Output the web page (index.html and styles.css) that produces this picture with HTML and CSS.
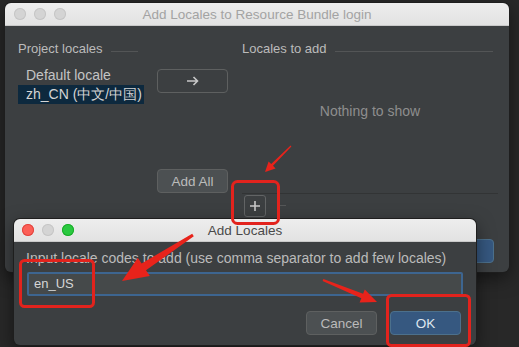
FILE: index.html
```html
<!DOCTYPE html>
<html lang="en">
<head>
    <meta charset="UTF-8">
    <meta name="viewport" content="width=device-width, initial-scale=1.0">
    <title>Add Locales</title>
    <link rel="stylesheet" href="styles.css">
</head>
<body>
    <div class="desktop">
        <div class="window main-window">
            <div class="titlebar inactive">
                <div class="lights"><span></span><span></span><span></span></div>
                <div class="title">Add Locales to Resource Bundle login</div>
            </div>
            <div class="window-body">
                <div class="panes">
                    <div class="col col-left">
                        <div class="header">Project locales<span class="rule"></span></div>
                        <ul class="list">
                            <li>Default locale</li>
                            <li class="selected">zh_CN (中文/中国)</li>
                        </ul>
                    </div>
                    <div class="col col-mid">
                        <button class="btn arrow-btn">
                            <svg width="13" height="10" viewBox="0 0 13 10"><path d="M1 5h10.5M7.5 1l4 4-4 4" fill="none" stroke="#c8c8c8" stroke-width="1.6"/></svg>
                        </button>
                        <button class="btn add-all">Add All</button>
                    </div>
                    <div class="col col-right">
                        <div class="header">Locales to add<span class="rule"></span></div>
                        <div class="empty">Nothing to show</div>
                        <div class="toolbar">
                            <button class="tool-btn">
                                <svg width="12" height="12" viewBox="0 0 12 12"><path d="M6 1v10M1 6h10" stroke="#c8c8c8" stroke-width="1.6"/></svg>
                            </button>
                            <span class="minus"></span>
                        </div>
                    </div>
                </div>
                <div class="footer">
                    <button class="btn primary">OK</button>
                </div>
            </div>
        </div>

        <div class="window dialog">
            <div class="titlebar">
                <div class="lights"><span class="red"></span><span></span><span class="green"></span></div>
                <div class="title">Add Locales</div>
            </div>
            <div class="window-body dialog-body">
                <div class="prompt">Input locale codes to add (use comma separator to add few locales)</div>
                <div class="input">en_US</div>
                <div class="dialog-footer">
                    <button class="btn">Cancel</button>
                    <button class="btn primary">OK</button>
                </div>
            </div>
        </div>

        <svg class="marks" width="519" height="347" viewBox="0 0 519 347">
            <g fill="none" stroke="#e2231d" stroke-width="3">
                <rect x="232.5" y="181.5" width="46" height="42" rx="5"/>
                <rect x="20.5" y="260.5" width="73" height="46" rx="4"/>
                <rect x="387.5" y="295.5" width="82" height="50" rx="4"/>
            </g>
            <g fill="#e8231b">
                <polygon points="290.6,145.6 271.2,164 268.6,161.4 265,172 275.6,168.4 273,165.8 291.4,146.4"/>
                <polygon points="192.2,233.7 141.6,263.5 137.8,257.7 122,281 149.8,276.1 146,270.3 193.8,236.3"/>
                <polygon points="323.4,279.1 363.1,293.7 364.8,289.5 377,302 359.6,302.5 361.3,298.3 322.6,280.9"/>
            </g>
        </svg>
    </div>
</body>
</html>
```

FILE: styles.css
```css
body {
    margin: 0;
    padding: 0;
    font-family: "Liberation Sans", Arial, sans-serif;
    font-size: 13px;
    background-color: #282828;
}

.desktop {
    position: relative;
    width: 519px;
    height: 347px;
    overflow: hidden;
    background-color: #282828;
}

.window {
    position: absolute;
    display: flex;
    flex-direction: column;
    border-radius: 6px;
    overflow: hidden;
    box-shadow: 0 0 0 1px #1e1e1e, 0 6px 18px rgba(0, 0, 0, 0.5);
}

.main-window {
    left: 5px;
    top: 3px;
    width: 504px;
    height: 269px;
}

.dialog {
    left: 14px;
    top: 219px;
    width: 462px;
    height: 126px;
}

.titlebar {
    position: relative;
    height: 23px;
    flex: none;
    display: flex;
    align-items: center;
    padding-left: 9px;
    background: linear-gradient(#ededed, #e2e2e2);
    border-bottom: 1px solid #c9c9c9;
    box-sizing: border-box;
}

.lights {
    display: flex;
    gap: 8px;
}

.lights span {
    width: 12px;
    height: 12px;
    border-radius: 50%;
    background-color: #d4d4d4;
    box-shadow: inset 0 0 0 1px #c6c6c6;
}

.lights .red {
    background-color: #fc5f57;
    box-shadow: inset 0 0 0 1px #e0443e;
}

.lights .green {
    background-color: #2ac940;
    box-shadow: inset 0 0 0 1px #1aab29;
}

.title {
    position: absolute;
    left: 0;
    right: 0;
    text-align: center;
    font-size: 13.5px;
    color: #4a4a4a;
    pointer-events: none;
}

.inactive .title {
    color: #a3a3a3;
}

.dialog .titlebar {
    padding-left: 8px;
}

.window-body {
    flex: 1;
    background-color: #3c3f41;
    color: #bbbbbb;
}

.panes {
    display: flex;
    padding: 15px 0 0 13px;
    height: 176px;
}

.col {
    display: flex;
    flex-direction: column;
}

.col-left {
    width: 126px;
}

.col-mid {
    width: 71px;
    margin-left: 13px;
}

.col-right {
    width: 256px;
    margin-left: 14px;
}

.header {
    display: flex;
    align-items: center;
    height: 16px;
    line-height: 16px;
}

.rule {
    flex: 1;
    height: 1px;
    margin: 4px 0 0 8px;
    background-color: #535556;
}

.col-left .rule {
    margin-right: 6px;
}

.col-right .rule {
    margin-right: 5px;
}

.list {
    list-style: none;
    margin: 9px 0 0;
    padding: 0;
}

.list li {
    height: 19px;
    line-height: 19px;
    padding-left: 8px;
    font-size: 14px;
    color: #c4c4c4;
    white-space: nowrap;
}

.list .selected {
    background-color: #0d293e;
    color: #d4d4d4;
}

.btn {
    width: 71px;
    height: 24px;
    padding: 0;
    border: 1px solid #5e6060;
    border-radius: 4px;
    background-color: #4c5052;
    color: #bbbbbb;
    font-family: inherit;
    font-size: 13.5px;
    display: flex;
    align-items: center;
    justify-content: center;
}

.arrow-btn {
    margin-top: 28px;
    background-color: #3c3f41;
}

.add-all {
    margin-top: 76px;
}

.btn.primary {
    background-color: #365880;
    border-color: #4c708c;
    color: #dfe6ee;
}

.empty {
    margin-top: 46px;
    height: 16px;
    line-height: 16px;
    text-align: center;
    font-size: 14px;
    color: #8e8e8e;
}

.toolbar {
    margin-top: 74px;
    display: flex;
    align-items: center;
    height: 23px;
    border-top: 1px solid #323435;
}

.tool-btn {
    width: 22px;
    height: 22px;
    margin-left: 2px;
    padding: 0;
    border: 1px solid #626465;
    border-radius: 3px;
    background-color: #3c3f41;
    display: flex;
    align-items: center;
    justify-content: center;
}

.minus {
    width: 8px;
    height: 1px;
    margin-left: 12px;
    background-color: #555758;
}

.footer {
    display: flex;
    justify-content: flex-end;
    margin-top: 22px;
    padding-right: 15px;
}

.dialog-body {
    padding: 8px 13px 0;
}

.prompt {
    height: 16px;
    line-height: 16px;
    margin-left: -1px;
    font-size: 14px;
    white-space: nowrap;
}

.input {
    margin-top: 6px;
    height: 24px;
    box-sizing: border-box;
    border: 2px solid #3d6590;
    border-radius: 2px;
    background-color: #45494a;
    padding-left: 5px;
    line-height: 20px;
    color: #d6d6d6;
}

.dialog-footer {
    display: flex;
    justify-content: flex-end;
    gap: 13px;
    margin-top: 15px;
    margin-right: 2px;
}

.marks {
    position: absolute;
    left: 0;
    top: 0;
    pointer-events: none;
}
```
